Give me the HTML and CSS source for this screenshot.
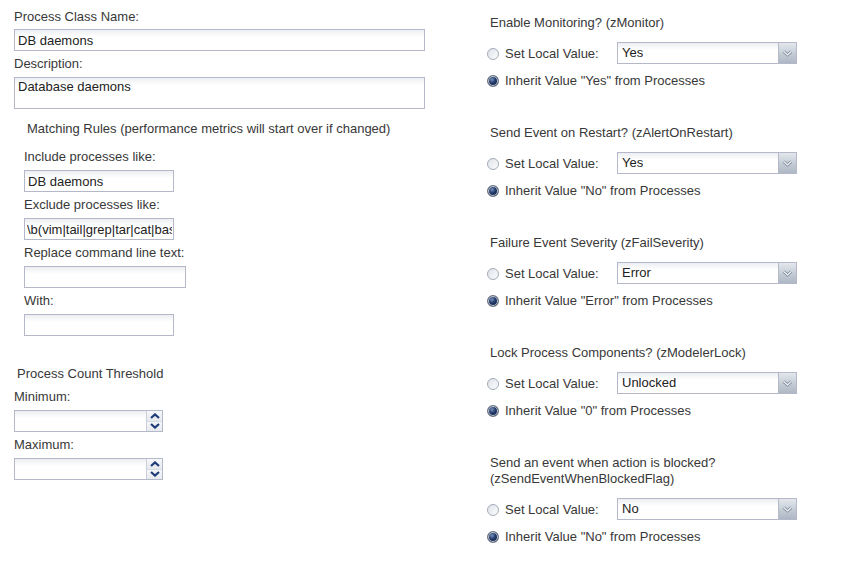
FILE: index.html
```html
<!DOCTYPE html>
<html>
<head>
<meta charset="utf-8">
<title>Process Class</title>
<link rel="stylesheet" href="styles.css">
</head>
<body>
<div class="page">
  <div class="col-left">
    <div class="field-label first">Process Class Name:</div>
    <input class="text wide" type="text" value="DB daemons">
    <div class="field-label">Description:</div>
    <textarea class="text wide area">Database daemons</textarea>

    <div class="section-title matching">Matching Rules (performance metrics will start over if changed)</div>
    <div class="rules">
      <div class="field-label">Include processes like:</div>
      <input class="text w150" type="text" value="DB daemons">
      <div class="field-label">Exclude processes like:</div>
      <input class="text w150 tight" type="text" value="\b(vim|tail|grep|tar|cat|bash)\b">
      <div class="field-label">Replace command line text:</div>
      <input class="text w162" type="text" value="">
      <div class="field-label">With:</div>
      <input class="text w150" type="text" value="">
    </div>

    <div class="section-title threshold">Process Count Threshold</div>
    <div class="field-label">Minimum:</div>
    <div class="spinner">
      <input class="spin-input" type="text" value="">
      <div class="spin-btns">
        <span class="spin-btn up"><svg width="10" height="6" viewBox="0 0 10 6"><path d="M1 5 L5 1.4 L9 5" fill="none" stroke="#1f3d78" stroke-width="2.2"/></svg></span>
        <span class="spin-btn down"><svg width="10" height="6" viewBox="0 0 10 6"><path d="M1 1 L5 4.6 L9 1" fill="none" stroke="#1f3d78" stroke-width="2.2"/></svg></span>
      </div>
    </div>
    <div class="field-label">Maximum:</div>
    <div class="spinner">
      <input class="spin-input" type="text" value="">
      <div class="spin-btns">
        <span class="spin-btn up"><svg width="10" height="6" viewBox="0 0 10 6"><path d="M1 5 L5 1.4 L9 5" fill="none" stroke="#1f3d78" stroke-width="2.2"/></svg></span>
        <span class="spin-btn down"><svg width="10" height="6" viewBox="0 0 10 6"><path d="M1 1 L5 4.6 L9 1" fill="none" stroke="#1f3d78" stroke-width="2.2"/></svg></span>
      </div>
    </div>
  </div>

  <div class="col-right">
    <div class="group">
      <div class="group-title">Enable Monitoring? (zMonitor)</div>
      <div class="row-local">
        <span class="radio"></span><span class="local-label">Set Local Value:</span>
        <div class="combo"><span class="combo-value">Yes</span><span class="combo-trigger"><svg width="18" height="20" viewBox="0 0 18 20"><path d="M5 8.5 L9 12 L13 8.5" fill="none" stroke="#7d8a9a" stroke-width="3"/><path d="M5 8.5 L9 12 L13 8.5" fill="none" stroke="#f4f6f8" stroke-width="1.3"/></svg></span></div>
      </div>
      <div class="row-inherit"><span class="radio checked"></span><span>Inherit Value "Yes" from Processes</span></div>
    </div>

    <div class="group">
      <div class="group-title">Send Event on Restart? (zAlertOnRestart)</div>
      <div class="row-local">
        <span class="radio"></span><span class="local-label">Set Local Value:</span>
        <div class="combo"><span class="combo-value">Yes</span><span class="combo-trigger"><svg width="18" height="20" viewBox="0 0 18 20"><path d="M5 8.5 L9 12 L13 8.5" fill="none" stroke="#7d8a9a" stroke-width="3"/><path d="M5 8.5 L9 12 L13 8.5" fill="none" stroke="#f4f6f8" stroke-width="1.3"/></svg></span></div>
      </div>
      <div class="row-inherit"><span class="radio checked"></span><span>Inherit Value "No" from Processes</span></div>
    </div>

    <div class="group">
      <div class="group-title">Failure Event Severity (zFailSeverity)</div>
      <div class="row-local">
        <span class="radio"></span><span class="local-label">Set Local Value:</span>
        <div class="combo"><span class="combo-value">Error</span><span class="combo-trigger"><svg width="18" height="20" viewBox="0 0 18 20"><path d="M5 8.5 L9 12 L13 8.5" fill="none" stroke="#7d8a9a" stroke-width="3"/><path d="M5 8.5 L9 12 L13 8.5" fill="none" stroke="#f4f6f8" stroke-width="1.3"/></svg></span></div>
      </div>
      <div class="row-inherit"><span class="radio checked"></span><span>Inherit Value "Error" from Processes</span></div>
    </div>

    <div class="group">
      <div class="group-title">Lock Process Components? (zModelerLock)</div>
      <div class="row-local">
        <span class="radio"></span><span class="local-label">Set Local Value:</span>
        <div class="combo"><span class="combo-value">Unlocked</span><span class="combo-trigger"><svg width="18" height="20" viewBox="0 0 18 20"><path d="M5 8.5 L9 12 L13 8.5" fill="none" stroke="#7d8a9a" stroke-width="3"/><path d="M5 8.5 L9 12 L13 8.5" fill="none" stroke="#f4f6f8" stroke-width="1.3"/></svg></span></div>
      </div>
      <div class="row-inherit"><span class="radio checked"></span><span>Inherit Value "0" from Processes</span></div>
    </div>

    <div class="group">
      <div class="group-title">Send an event when action is blocked?<br>(zSendEventWhenBlockedFlag)</div>
      <div class="row-local">
        <span class="radio"></span><span class="local-label">Set Local Value:</span>
        <div class="combo"><span class="combo-value">No</span><span class="combo-trigger"><svg width="18" height="20" viewBox="0 0 18 20"><path d="M5 8.5 L9 12 L13 8.5" fill="none" stroke="#7d8a9a" stroke-width="3"/><path d="M5 8.5 L9 12 L13 8.5" fill="none" stroke="#f4f6f8" stroke-width="1.3"/></svg></span></div>
      </div>
      <div class="row-inherit"><span class="radio checked"></span><span>Inherit Value "No" from Processes</span></div>
    </div>
  </div>
</div>
</body>
</html>
```

FILE: styles.css
```css
* { box-sizing: border-box; }
html, body { margin: 0; padding: 0; background: #fff; }
body {
  font-family: "Liberation Sans", Arial, sans-serif;
  font-size: 13px;
  line-height: 16px;
  color: #383838;
}
.page { display: flex; padding-left: 14px; }

.col-left {
  width: 412px;
  padding-top: 9px;
  display: flex;
  flex-direction: column;
  align-items: flex-start;
}
.field-label { line-height: 16px; margin-bottom: 5px; }
.field-label.first { margin-bottom: 4px; }

.text {
  display: block;
  height: 22px;
  margin: 0 0 5px 0;
  padding: 0 3px;
  border: 1px solid #b5b8c8;
  background: linear-gradient(#eceef2, #fff 7px);
  font-family: "Liberation Sans", Arial, sans-serif;
  font-size: 13px;
  color: #222;
  outline: none;
}
.text.tight { padding: 0 1px 0 2px; }
.wide { width: 411px; }
.area {
  height: 32px;
  padding: 1px 3px;
  line-height: 16px;
  resize: none;
  overflow: hidden;
  margin-bottom: 12px;
}
.w150 { width: 150px; }
.w162 { width: 162px; }

.section-title.matching { padding-left: 13px; margin-bottom: 12px; }
.rules {
  padding-left: 10px;
  display: flex;
  flex-direction: column;
  align-items: flex-start;
}
.section-title.threshold { padding-left: 3px; margin-top: 25px; margin-bottom: 7px; }

.spinner {
  display: flex;
  width: 149px;
  height: 22px;
  border: 1px solid #b5b8c8;
  margin-bottom: 5px;
}
.spin-input {
  flex: 1;
  min-width: 0;
  height: 100%;
  border: 0;
  padding: 0 3px;
  background: linear-gradient(#eceef2, #fff 7px);
  font-family: "Liberation Sans", Arial, sans-serif;
  font-size: 13px;
  outline: none;
}
.spin-btns {
  width: 16px;
  display: flex;
  flex-direction: column;
  border-left: 1px solid #c9ced8;
}
.spin-btn {
  flex: 1;
  display: flex;
  align-items: center;
  justify-content: center;
  background: linear-gradient(#f7f8fa, #e6e9ee);
}
.spin-btn.up { border-bottom: 1px solid #d6dbe2; }

.col-right { margin-left: 61px; padding-top: 15px; width: 330px; }
.group { margin-bottom: 36px; }
.group-title { padding-left: 3px; line-height: 16px; margin-bottom: 11px; }
.row-local { display: flex; align-items: center; height: 22px; padding-top: 1px; }
.row-inherit { display: flex; align-items: center; height: 16px; margin-top: 9px; }
.local-label { width: 112px; }

.radio {
  flex: none;
  width: 12px;
  height: 12px;
  margin-right: 6px;
  border-radius: 50%;
  border: 1px solid #a3acb8;
  background: linear-gradient(135deg, #dfe3e9, #fbfcfd);
}
.radio.checked {
  border: 1px solid #6c7480;
  background: radial-gradient(circle at 40% 35%, #7890b8 0, #21396a 40%, #0c1a36 100%);
  box-shadow: inset 0 0 0 1px #c9cfd8;
}

.combo {
  display: flex;
  width: 180px;
  height: 22px;
  margin-top: -1px;
  border: 1px solid #b5b8c8;
  background: linear-gradient(#eceef2, #fff 7px);
}
.combo-value { flex: 1; padding-left: 4px; line-height: 20px; color: #222; }
.combo-trigger {
  width: 18px;
  display: flex;
  align-items: center;
  justify-content: center;
  border-left: 1px solid #b5b8c8;
  background: linear-gradient(#e4e8ed, #c3cbd5 55%, #aeb8c4);
}
```
